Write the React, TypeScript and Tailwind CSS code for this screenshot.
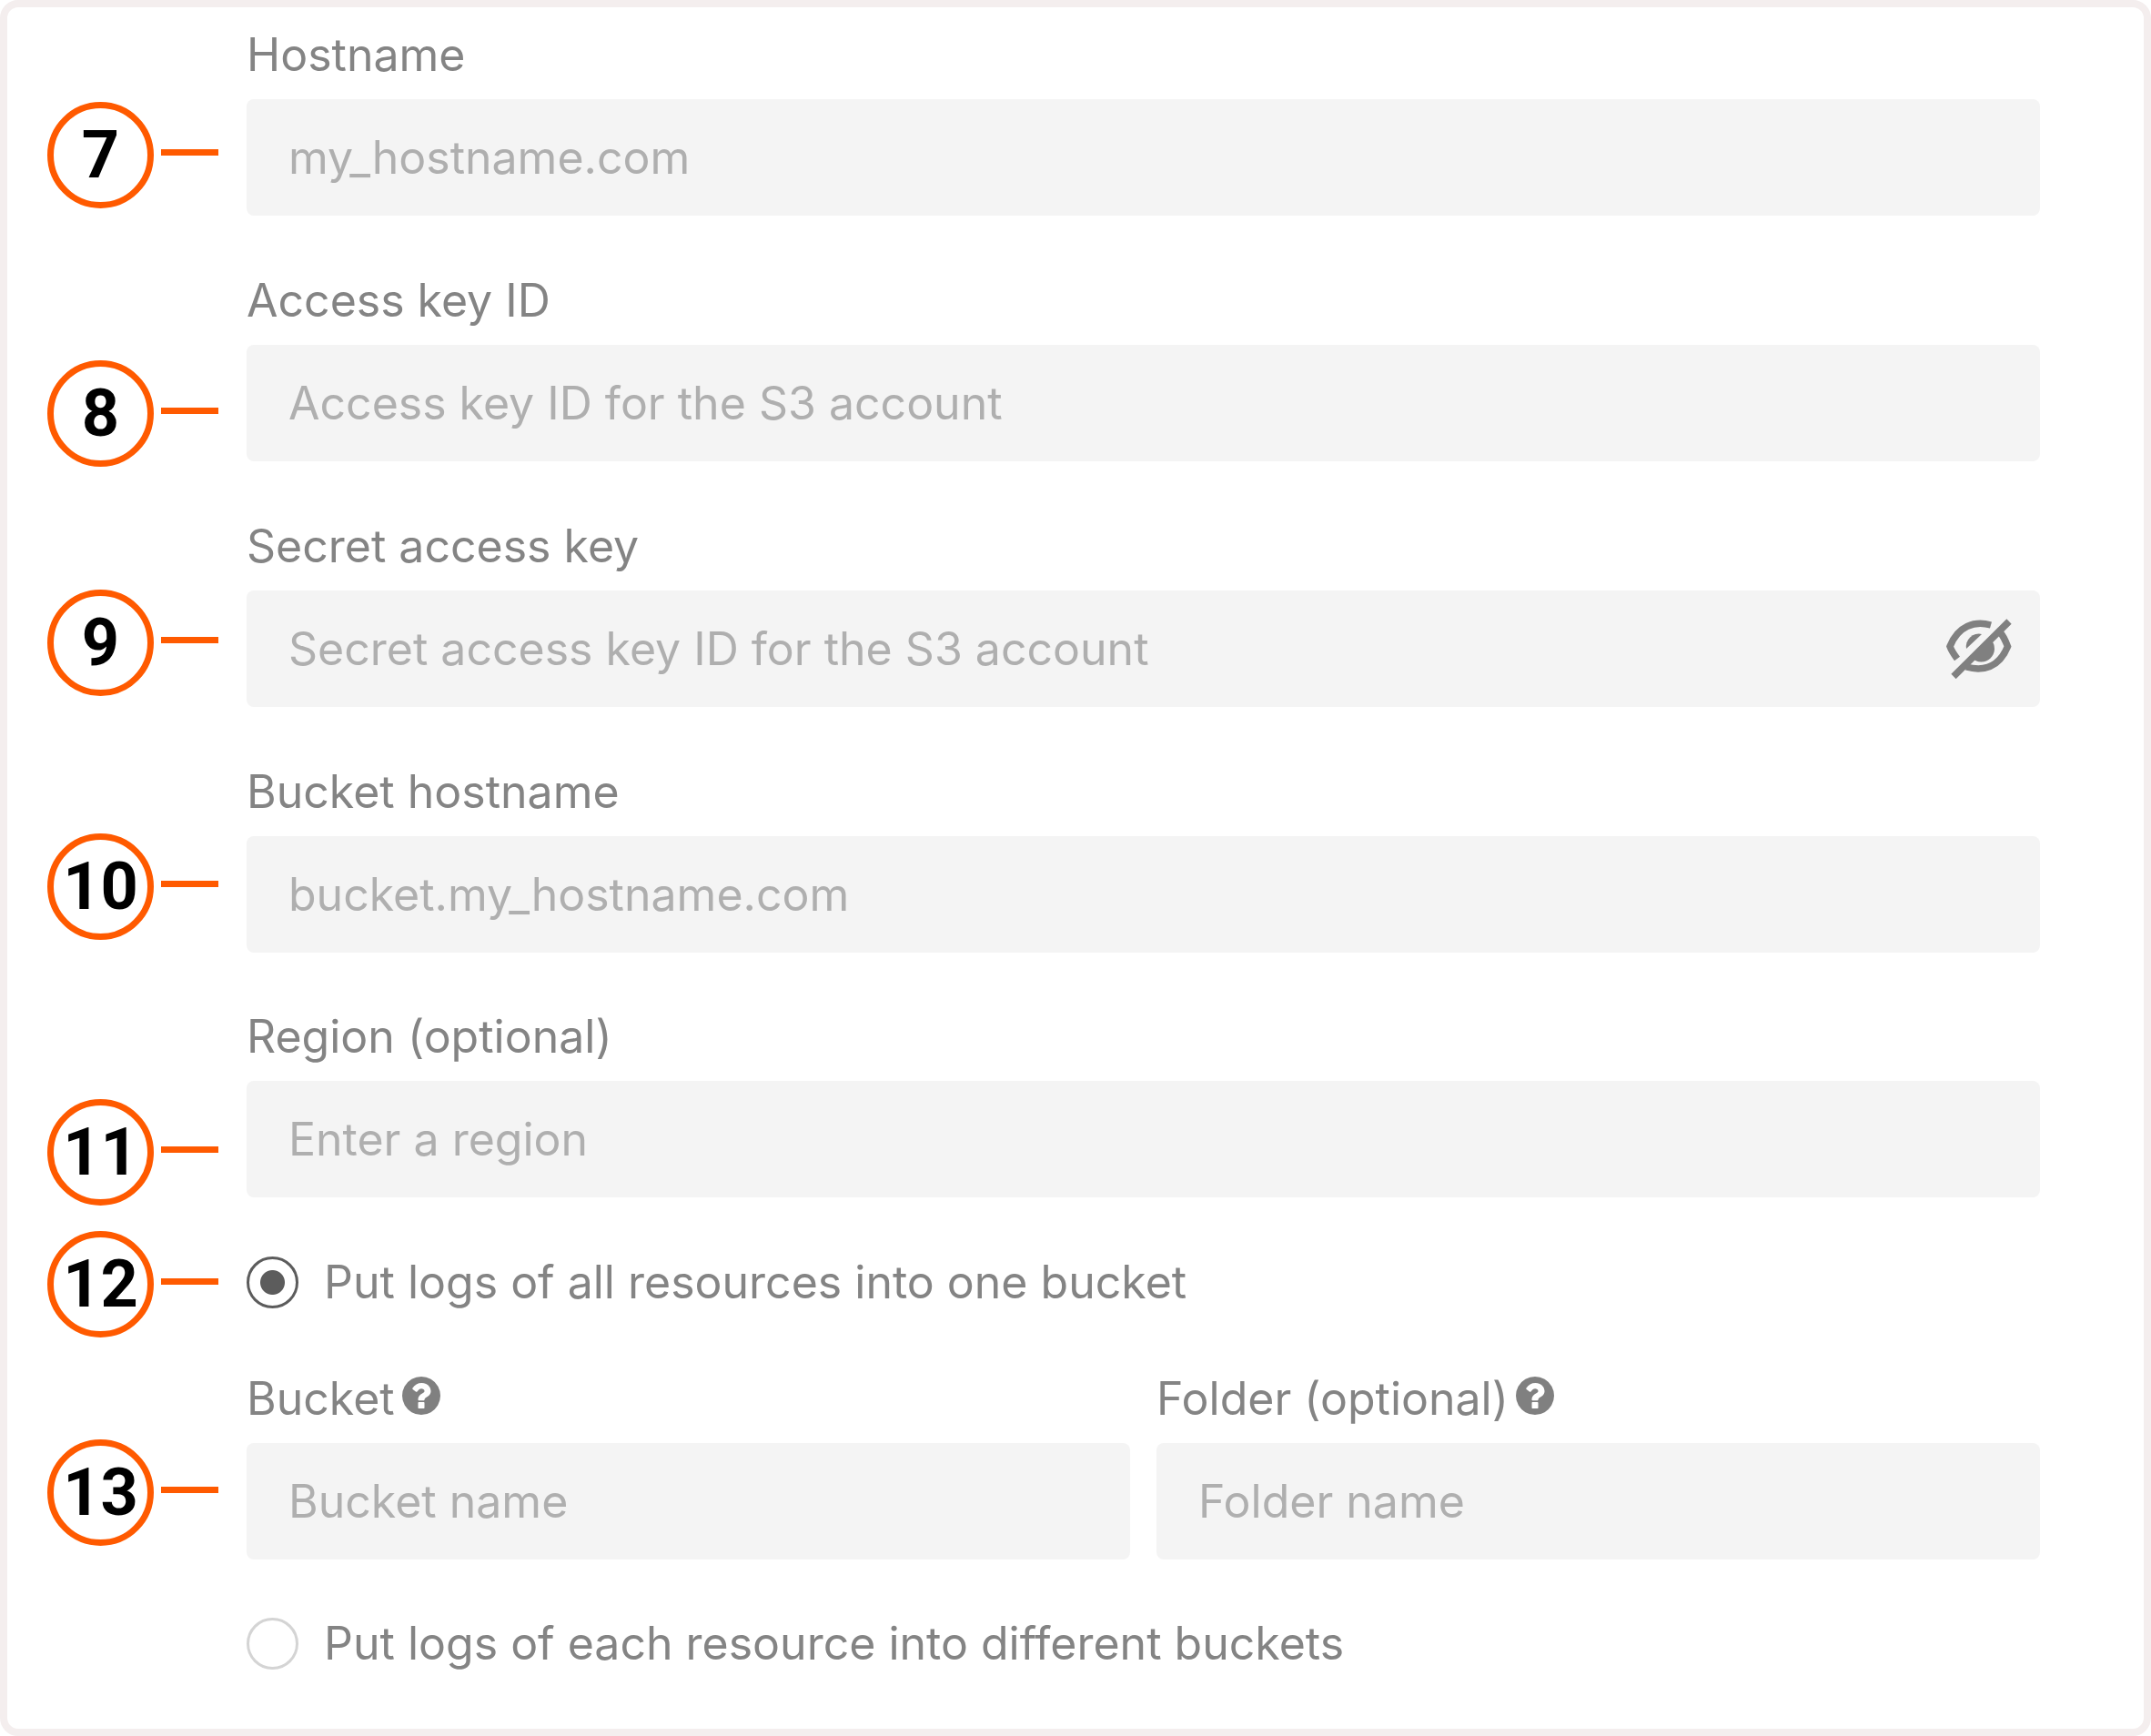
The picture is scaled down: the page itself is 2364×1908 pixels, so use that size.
import { useState, type ReactNode } from 'react';

const labelText = "text-[50px] leading-[72px] text-[#848484]";
const fieldBox =
  "block h-32 w-full rounded-lg bg-[#f4f4f4] pl-[46px] text-[50px] text-[#555555] placeholder:text-[#afafaf] placeholder:opacity-100 outline-none";

function Marker({ n }: { n: number }) {
  return (
    <div className="flex items-center gap-2">
      <span className="flex size-[117px] shrink-0 items-center justify-center rounded-full border-[7px] border-[#ff5a00] font-[Roboto] text-[72px] leading-none font-bold text-black">
        {n}
      </span>
      <span className="mb-[7px] h-[7px] w-[63px] shrink-0 bg-[#ff5a00]" />
    </div>
  );
}

function HelpIcon() {
  return (
    <svg viewBox="128 128 1536 1536" className="size-[42px]" fill="#808080" aria-hidden="true">
      <path d="M1024 1376v-192q0-14-9-23t-23-9h-192q-14 0-23 9t-9 23v192q0 14 9 23t23 9h192q14 0 23-9t9-23zm256-672q0-88-55.5-163t-138.5-116-170-41q-243 0-371 213-15 24 8 42l132 100q7 6 19 6 16 0 25-12 53-68 86-92 34-24 86-24 48 0 85.5 26t37.5 59q0 38-20 61t-68 45q-63 28-115.5 86.5t-52.500 125.500v36q0 14 9 23t23 9h192q14 0 23-9t9-23q0-19 21.500-49.500t54.500-49.500q32-18 49-28.500t46-35 44.500-48 28-60.500 12.500-81zm384 192q0 209-103 385.500t-279.500 279.500-385.500 103-385.500-103-279.500-279.500-103-385.500 103-385.500 279.500-279.500 385.500-103 385.500 103 279.500 279.500 103 385.500z" />
    </svg>
  );
}

function EyeOffIcon() {
  return (
    <svg viewBox="0 0 72 66" className="h-[66px] w-[72px]" aria-hidden="true">
      <g fill="none" stroke="#808080" strokeWidth="7.5">
        <path d="M49 7C31 2 13 8 4 30.5C6 36 9 40 12 44" />
        <path d="M59 15C63 19 65 24 67.500 30.500C58 54 40 58 22 53" />
        <path d="M8 63.500L69 3" />
      </g>
      <path d="M22 33A14 14 0 0 1 39 17Z" fill="#808080" />
      <path d="M49 23A14.500 14.500 0 0 1 28 43Z" fill="#808080" />
    </svg>
  );
}

function Field({ id, label, placeholder, help, type = 'text', children }: {
  id: string; label: string; placeholder: string; help?: boolean; type?: string; children?: ReactNode;
}) {
  return (
    <div className="min-w-0 flex-1">
      <div className="mb-[13px] flex items-center gap-2">
        <label htmlFor={id} className={labelText}>{label}</label>
        {help && (
          <button type="button" aria-label={`About ${label}`} className="mb-[6px]">
            <HelpIcon />
          </button>
        )}
      </div>
      <div className="relative">
        <input id={id} type={type} placeholder={placeholder} className={fieldBox} />
        {children}
      </div>
    </div>
  );
}

function Radio({ label, checked, onChange }: { label: string; checked: boolean; onChange: () => void }) {
  return (
    <label className="flex items-center gap-7 text-[50px] leading-[57px] text-[#848484]">
      <input
        type="radio"
        name="bucket-mode"
        checked={checked}
        onChange={onChange}
        className="size-[57px] shrink-0 appearance-none rounded-full border-[3px] border-[#d4d4d4] bg-white checked:border-[#5c5c5c] checked:bg-[radial-gradient(circle,#5c5c5c_13px,transparent_14px)]"
      />
      {label}
    </label>
  );
}

export default function App() {
  const [mode, setMode] = useState('one');
  const [visible, setVisible] = useState(false);
  return (
    <form className="flex min-h-screen flex-col rounded-[20px] border-8 border-[#f4eeee] bg-white pt-4 pr-[114px] pb-[65px] pl-11 font-[Inter,sans-serif]">
      <div className="mb-[57px] flex items-start gap-[31px]">
        <div className="pt-[88px]"><Marker n={7} /></div>
        <Field id="hostname" label="Hostname" placeholder="my_hostname.com" />
      </div>
      <div className="mb-[51px] flex items-start gap-[31px]">
        <div className="pt-[102px]"><Marker n={8} /></div>
        <Field id="access-key" label="Access key ID" placeholder="Access key ID for the S3 account" />
      </div>
      <div className="mb-[57px] flex items-start gap-[31px]">
        <div className="pt-[84px]"><Marker n={9} /></div>
        <Field
          id="secret-key"
          label="Secret access key"
          placeholder="Secret access key ID for the S3 account"
          type={visible ? 'text' : 'password'}
        >
          <button
            type="button"
            aria-label="Toggle key visibility"
            onClick={() => setVisible(!visible)}
            className="absolute top-[31px] right-[31px]"
          >
            <EyeOffIcon />
          </button>
        </Field>
      </div>
      <div className="mb-14 flex items-start gap-[31px]">
        <div className="pt-[82px]"><Marker n={10} /></div>
        <Field id="bucket-hostname" label="Bucket hostname" placeholder="bucket.my_hostname.com" />
      </div>
      <div className="flex items-start gap-[31px]">
        <div className="pt-[105px]"><Marker n={11} /></div>
        <Field id="region" label="Region (optional)" placeholder="Enter a region" />
      </div>
      <div className="mt-7 mb-[31px] flex items-center gap-[31px]">
        <Marker n={12} />
        <div className="pb-[5px]">
          <Radio label="Put logs of all resources into one bucket" checked={mode === 'one'} onChange={() => setMode('one')} />
        </div>
      </div>
      <div className="flex items-start gap-[31px]">
        <div className="pt-[81px]"><Marker n={13} /></div>
        <div className="flex min-w-0 flex-1 gap-[29px]">
          <Field id="bucket" label="Bucket" placeholder="Bucket name" help />
          <Field id="folder" label="Folder (optional)" placeholder="Folder name" help />
        </div>
      </div>
      <div className="mt-16 pl-[219px]">
        <Radio label="Put logs of each resource into different buckets" checked={mode === 'each'} onChange={() => setMode('each')} />
      </div>
    </form>
  );
}
